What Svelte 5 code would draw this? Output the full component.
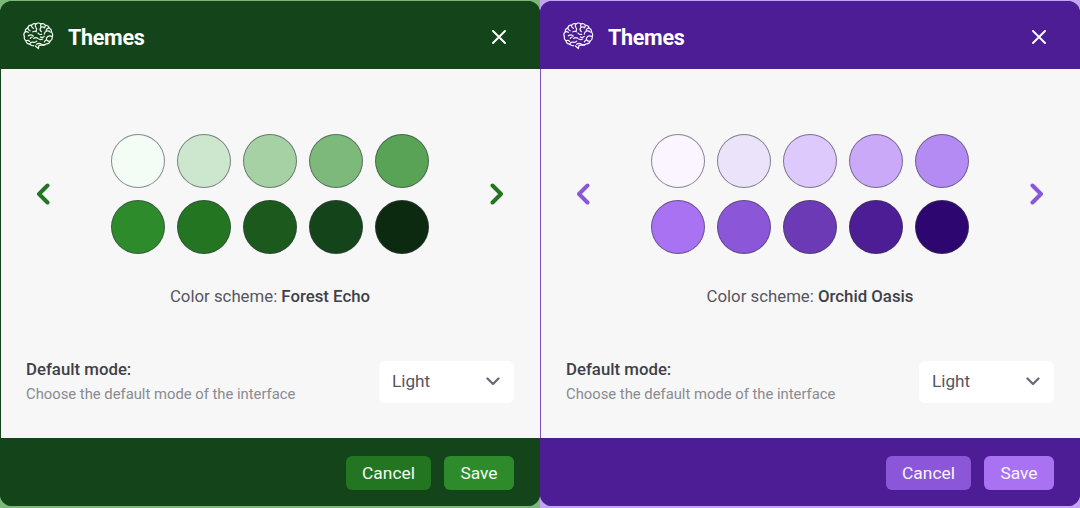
<script>
  const themes = [
    {
      name: 'Forest Echo',
      dark: '#14451a',
      border: '#14451a',
      outer: '#7cb87a',
      accent: '#237522',
      cancel: '#237522',
      save: '#2e8b2b',
      text: '#f3fcf3',
      swatches: ['#f3fdf5', '#cde7cf', '#a5d1a5', '#7db97b', '#58a355', '#2e8b2b', '#237522', '#1b5a1c', '#14451a', '#0b2a0f']
    },
    {
      name: 'Orchid Oasis',
      dark: '#4c1d95',
      border: '#7c4fc4',
      outer: '#c4a5f5',
      accent: '#8b57d8',
      cancel: '#8b57d8',
      save: '#a872f3',
      text: '#faf5ff',
      swatches: ['#faf5ff', '#ebe3fa', '#ddc9fc', '#c9a9f8', '#b48bf3', '#a872f3', '#8b57d8', '#6d3ab5', '#4c1d95', '#2e0670']
    }
  ];
</script>

<div class="page">
  {#each themes as theme}
    <section
      class="panel"
      style:--dark={theme.dark}
      style:--edge={theme.border}
      style:--outer={theme.outer}
      style:--accent={theme.accent}
      style:--cancel={theme.cancel}
      style:--save={theme.save}
      style:--on-dark={theme.text}
    >
      <div class="dialog">
        <header>
          <svg class="brain" viewBox="0 0 32 32" fill="none" stroke="currentColor" stroke-width="1.250" stroke-linecap="round" stroke-linejoin="round">
            <path d="M11 25.500c-1.500.2-3.200-.4-4-1.700-2 .1-3.800-1.400-3.900-3.400C1.600 19.400 1 17.700 1.500 16c-.9-1.600-.5-3.700.9-4.800-.2-1.800.9-3.500 2.600-4.100.4-1.700 2-2.900 3.700-2.700C9.900 2.900 11.700 2.300 13.400 3c1.500-1.100 3.600-1.100 5.100 0 1.700-.6 3.600 0 4.600 1.400 1.800-.1 3.400 1.100 3.800 2.800 1.700.7 2.800 2.500 2.500 4.300 1.200 1.200 1.500 3.100.7 4.600.4 1.900-.5 3.800-2.200 4.600-.4 1.800-2.100 3.100-4 2.900-1.100 1.200-2.900 1.700-4.500 1.100-.9.4-1.900.5-2.900.3l-.6 3.500-3-2.700" />
            <path d="M7 24c.3-1.600 1.700-2.500 3.300-2.200M3.100 20.400c1.300-.7 2.700-.5 3.700.5M5 7.100c.1 1.500 1 2.600 2.400 3M2.400 11.200c1.100-.4 2.200-.2 3.100.5M5.500 15.300c1.800-1.300 3.900-1.200 5.200.3M8.700 4.400c-.1 1.500.6 2.600 2 3.200M13.400 3c-1 1.300-.9 2.800.1 4 .9 1 .8 2.300-.2 3.200M10.200 11.200c1.200-.8 2.500-.8 3.600 0M18.500 3c-.6 1.300-.4 2.500.4 3.500M19 11c-1.400-1-1.700-2.700-.7-4.100 1-1 2.400-1.100 3.500-.4M23.100 4.400c.1 1.200-.3 2.100-1.200 2.800M26.900 7.200c-1.500.1-2.600 1-3 2.500M22 13.500c.1-1.600 1.100-2.800 2.600-3.200 1.300-.3 2.700.2 3.600 1.200M18 16.500c1.300.7 2.900.5 3.900-.6M29.900 16.100c-1.300-.9-3-1-4.400-.2-1.200.8-1.600 2.100-1.300 3.400M11 18c1.500-1 3.300-.9 4.600.2 1.400 1 3.200 1.200 4.700.4M10.300 21.800c1.500.5 3 .1 3.900-1M14 24c1.600-1 3.600-1 5.100 0 1 .7 2.200.8 3.200.4M27.700 20.900c-1.400.2-2.500-.3-3.300-1.400-1.100.3-2 1.100-2.300 2.200M15.500 12.500c1 1.200 2.300 1.700 3.800 1.300M7.500 18c.3-.9 1-1.400 2-1.500" />
          </svg>
          <h2>Themes</h2>
          <button class="close" aria-label="Close">
            <svg viewBox="0 0 14 14" width="14" height="14" fill="none" stroke="currentColor" stroke-width="1.900" stroke-linecap="round">
              <path d="M1 1l12 12M13 1L1 13" />
            </svg>
          </button>
        </header>

        <div class="content">
          <div class="picker">
            <button class="arrow" aria-label="Previous">
              <svg viewBox="0 0 14 22" width="14" height="22" fill="none" stroke="currentColor" stroke-width="4" stroke-linecap="round" stroke-linejoin="round">
                <path d="M11.500 2.500L3 11l8.500 8.500" />
              </svg>
            </button>
            <div class="swatches">
              {#each theme.swatches as color}
                <span class="swatch" style:background={color}></span>
              {/each}
            </div>
            <button class="arrow" aria-label="Next">
              <svg viewBox="0 0 14 22" width="14" height="22" fill="none" stroke="currentColor" stroke-width="4" stroke-linecap="round" stroke-linejoin="round">
                <path d="M2.500 2.500L11 11l-8.500 8.500" />
              </svg>
            </button>
          </div>

          <p class="scheme">Color scheme: <strong>{theme.name}</strong></p>

          <div class="mode">
            <div>
              <div class="mode-title">Default mode:</div>
              <div class="mode-desc">Choose the default mode of the interface</div>
            </div>
            <div class="select">
              <span>Light</span>
              <svg viewBox="0 0 14 9" width="14" height="9" fill="none" stroke="#6b6b76" stroke-width="2.300" stroke-linecap="round" stroke-linejoin="round">
                <path d="M1.500 1.500L7 7l5.500-5.500" />
              </svg>
            </div>
          </div>
        </div>

        <footer>
          <button class="btn cancel">Cancel</button>
          <button class="btn save">Save</button>
        </footer>
      </div>
    </section>
  {/each}
</div>

<style>
  :global(body) {
    margin: 0;
    font-family: Roboto, "Liberation Sans", sans-serif;
  }

  .page {
    display: flex;
    width: 1080px;
    height: 508px;
    overflow: hidden;
  }

  .panel {
    width: 540px;
    height: 508px;
    padding: 1px 0 2px;
    box-sizing: border-box;
    background: var(--outer);
  }

  .dialog {
    display: flex;
    flex-direction: column;
    height: 100%;
    border-radius: 12px;
    overflow: hidden;
    background: var(--dark);
  }

  header {
    display: flex;
    align-items: center;
    height: 68px;
    padding: 4px 34px 0 23px;
    box-sizing: border-box;
    flex: none;
    background: var(--dark);
    color: var(--on-dark);
  }

  .brain {
    width: 31px;
    height: 31px;
    margin-right: 14px;
    margin-top: -1px;
  }

  h2 {
    flex: 1;
    margin: 0;
    font-size: 21.500px;
    font-weight: 700;
    letter-spacing: -0.3px;
    color: #fff;
  }

  .close {
    display: flex;
    padding: 0;
    border: 0;
    background: none;
    color: #fff;
  }

  .content {
    flex: 1;
    display: flex;
    flex-direction: column;
    background: #f7f7f7;
    border-left: 1px solid var(--edge);
    padding: 65px 26px 0 25px;
    min-height: 0;
  }

  .picker {
    display: flex;
    align-items: center;
    justify-content: space-between;
    padding: 0 10px;
  }

  .arrow {
    display: flex;
    padding: 0;
    border: 0;
    background: none;
    color: var(--accent);
  }

  .swatches {
    display: grid;
    grid-template-columns: repeat(5, 54px);
    gap: 12px;
  }

  .swatch {
    width: 54px;
    height: 54px;
    box-sizing: border-box;
    border-radius: 50%;
    border: 1px solid rgba(60, 60, 70, 0.6);
  }

  .scheme {
    margin: 32px 0 0;
    font-size: 16.800px;
    line-height: 20px;
    text-align: center;
    color: #55555f;
  }

  .scheme strong {
    font-weight: 500;
    color: #3f3f4a;
  }

  .mode {
    display: flex;
    align-items: center;
    justify-content: space-between;
    margin-top: 53px;
  }

  .mode-title {
    font-size: 16.800px;
    line-height: 20px;
    font-weight: 500;
    color: #3f3f4a;
  }

  .mode-desc {
    margin-top: 5px;
    font-size: 14.800px;
    line-height: 20px;
    color: #8a8a92;
  }

  .select {
    display: flex;
    align-items: center;
    justify-content: space-between;
    width: 135px;
    height: 42px;
    box-sizing: border-box;
    padding: 0 14px 0 13px;
    border-radius: 6px;
    background: #fff;
    font-size: 17.200px;
    color: #55555f;
  }

  .select span {
    margin-top: -1px;
  }

  footer {
    display: flex;
    align-items: center;
    justify-content: flex-end;
    gap: 13px;
    height: 68px;
    padding: 2px 26px 0;
    box-sizing: border-box;
    flex: none;
    background: var(--dark);
  }

  .btn {
    height: 34px;
    padding: 0;
    border: 0;
    border-radius: 6px;
    font-family: inherit;
    font-size: 17.400px;
    color: var(--on-dark);
  }

  .cancel {
    width: 85px;
    background: var(--cancel);
  }

  .save {
    width: 70px;
    background: var(--save);
  }
</style>
